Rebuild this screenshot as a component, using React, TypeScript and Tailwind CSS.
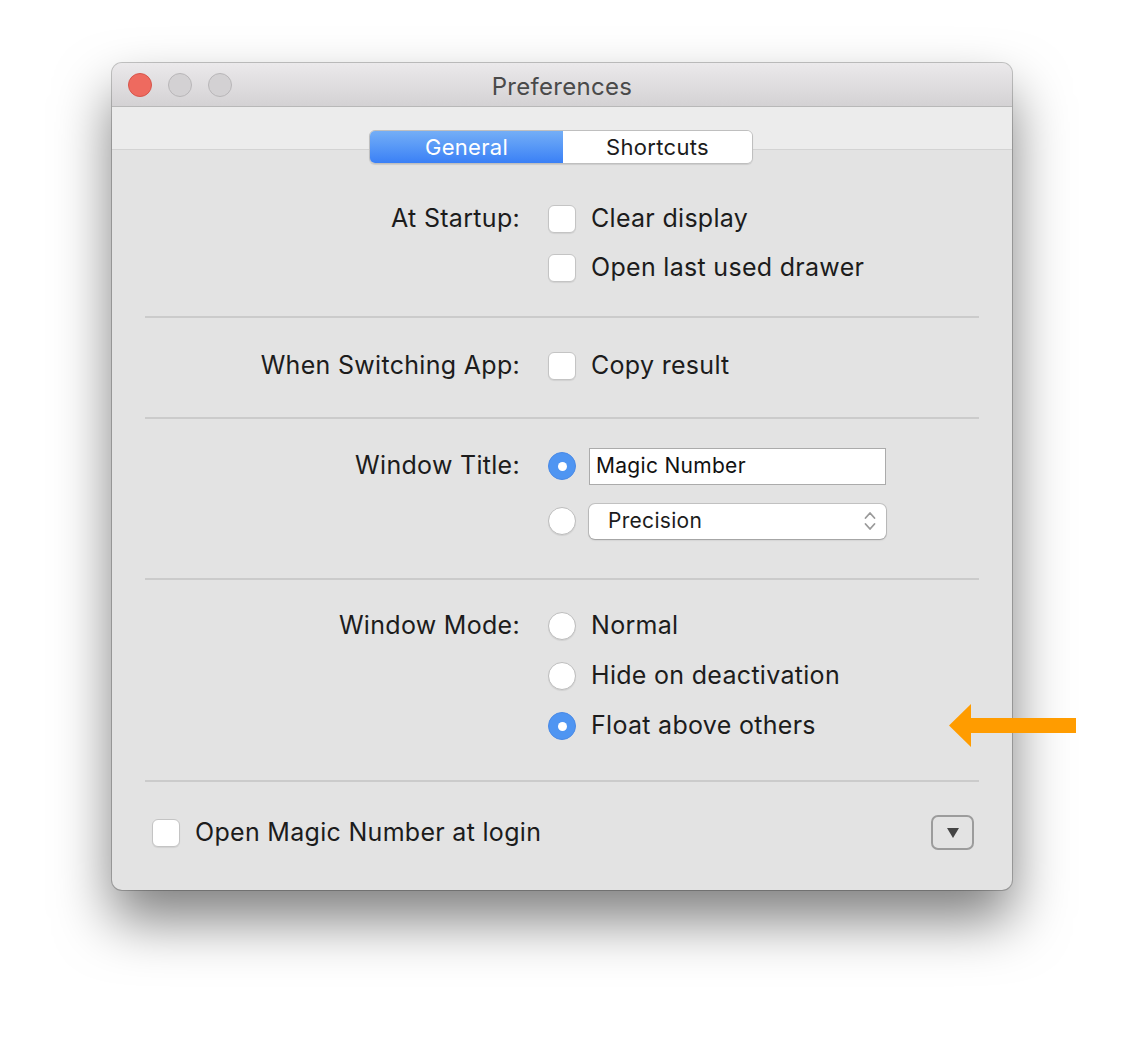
import React from 'react'

const font = { fontFamily: 'Inter, "Noto Sans", "Liberation Sans", sans-serif' }

function Checkbox() {
  return <div className="w-[28px] h-[28px] shrink-0 rounded-[6px] bg-white border border-[#c4c4c4] shadow-[0_1px_1px_rgba(0,0,0,0.08)]" />
}

function Radio({ on }: { on?: boolean }) {
  if (on) {
    return (
      <div className="w-[28px] h-[28px] shrink-0 rounded-full bg-[#4f95f2] border border-[#4a8ae6] flex items-center justify-center">
        <div className="w-[9px] h-[9px] rounded-full bg-white" />
      </div>
    )
  }
  return <div className="w-[28px] h-[28px] shrink-0 rounded-full bg-white border border-[#bdbdbd] shadow-[0_1px_1px_rgba(0,0,0,0.08)]" />
}

function Row({ label, children, h = 'h-[50px]' }: { label?: string; children: React.ReactNode; h?: string }) {
  return (
    <div className={`flex items-center ${h}`}>
      <div className="w-[408px] text-right text-[25px] tracking-[0.3px] text-[#1c1c1c]">{label}</div>
      <div className="ml-[28px] flex items-center">{children}</div>
    </div>
  )
}

function Option({ control, text }: { control: React.ReactNode; text: string }) {
  return (
    <div className="flex items-center">
      {control}
      <span className="ml-[15px] text-[25px] tracking-[0.3px] text-[#1c1c1c]">{text}</span>
    </div>
  )
}

function Sep() {
  return <div className="mx-[33px] h-[2px] bg-[#cbcbcb]" />
}

export default function App() {
  return (
    <div className="relative w-[1124px] h-[1050px] bg-white pt-[63px]" style={font}>
      <div className="mx-auto w-[900px] h-[827px] rounded-[10px] bg-[#e3e3e3] overflow-hidden shadow-[0_0_0_1px_rgba(0,0,0,0.22),0_30px_55px_rgba(0,0,0,0.5)] flex flex-col">
        {/* title bar */}
        <div className="relative h-[44px] shrink-0 bg-gradient-to-b from-[#ebe9eb] to-[#d4d2d4] border-b border-[#b8b8b8] flex items-center justify-center">
          <div className="absolute left-[16px] top-[10px] flex gap-[16px]">
            <div className="w-[24px] h-[24px] rounded-full bg-[#ee6a5f] border border-[#d6554b]" />
            <div className="w-[24px] h-[24px] rounded-full bg-[#d3d1d3] border border-[#b8b6b8]" />
            <div className="w-[24px] h-[24px] rounded-full bg-[#d3d1d3] border border-[#b8b6b8]" />
          </div>
          <span className="mt-[4px] text-[24px] tracking-[0.3px] text-[#4a4a4a]">Preferences</span>
        </div>
        {/* toolbar with tabs */}
        <div className="relative h-[43px] shrink-0 bg-[#ececec] border-b border-[#d3d3d3]">
          <div className="absolute left-[257px] top-[23px] flex h-[34px] w-[384px] rounded-[6px] border border-[#bfbfbf] overflow-hidden shadow-[0_1px_1px_rgba(0,0,0,0.1)] text-[22px] tracking-[0.3px]">
            <div className="w-[193px] flex items-center justify-center text-white bg-gradient-to-b from-[#74aef6] to-[#3a80f6]">General</div>
            <div className="flex-1 flex items-center justify-center text-[#1c1c1c] bg-white">Shortcuts</div>
          </div>
        </div>

        <div className="pt-[44px] pb-[24px]">
          <Row label="At Startup:" h="h-[49px]">
            <Option control={<Checkbox />} text="Clear display" />
          </Row>
          <Row h="h-[49px]">
            <Option control={<Checkbox />} text="Open last used drawer" />
          </Row>
        </div>
        <Sep />
        <div className="pt-[23px] pb-[26px]">
          <Row label="When Switching App:">
            <Option control={<Checkbox />} text="Copy result" />
          </Row>
        </div>
        <Sep />
        <div className="pt-[27px] pb-[37px] flex flex-col gap-[15px]">
          <Row label="Window Title:" h="h-[40px]">
            <Radio on />
            <div className="ml-[13px] w-[297px] h-[37px] bg-white border border-[#ababab] flex items-center px-[6px] text-[21px] tracking-[0.3px] text-[#111]">Magic Number</div>
          </Row>
          <Row h="h-[40px]">
            <Radio />
            <div className="ml-[13px] w-[297px] h-[35px] bg-white rounded-[6px] shadow-[0_0_0_1px_rgba(0,0,0,0.14),0_1px_2px_rgba(0,0,0,0.2)] flex items-center pl-[19px] pr-[10px] text-[21px] tracking-[0.3px] text-[#1c1c1c]">
              <span className="flex-1">Precision</span>
              <svg width="12" height="22" viewBox="0 0 12 22" fill="none" stroke="#9a9a9a" strokeWidth="1.8" strokeLinecap="round" strokeLinejoin="round">
                <path d="M1.5 8 L6 3 L10.5 8" />
                <path d="M1.5 14 L6 19 L10.5 14" />
              </svg>
            </div>
          </Row>
        </div>
        <Sep />
        <div className="pt-[21px] pb-[29px]">
          <Row label="Window Mode:">
            <Option control={<Radio />} text="Normal" />
          </Row>
          <Row>
            <Option control={<Radio />} text="Hide on deactivation" />
          </Row>
          <Row>
            <Option control={<Radio on />} text="Float above others" />
          </Row>
        </div>
        <Sep />
        <div className="flex items-center justify-between pl-[40px] pr-[38px] pt-[32px]">
          <Option control={<Checkbox />} text="Open Magic Number at login" />
          <div className="w-[43px] h-[35px] rounded-[7px] border-2 border-[#9c9c9c] flex items-center justify-center">
            <svg width="14" height="12" viewBox="0 0 14 12">
              <path d="M1 1 H13 L7 11 Z" fill="#444" />
            </svg>
          </div>
        </div>
      </div>

      {/* orange arrow annotation */}
      <svg className="absolute left-[949px] top-[704px]" width="128" height="44" viewBox="0 0 128 44">
        <path d="M0 21.5 L22 0 L22 14 L127 14 L127 29 L22 29 L22 43 Z" fill="#ff9c00" />
      </svg>
    </div>
  )
}
